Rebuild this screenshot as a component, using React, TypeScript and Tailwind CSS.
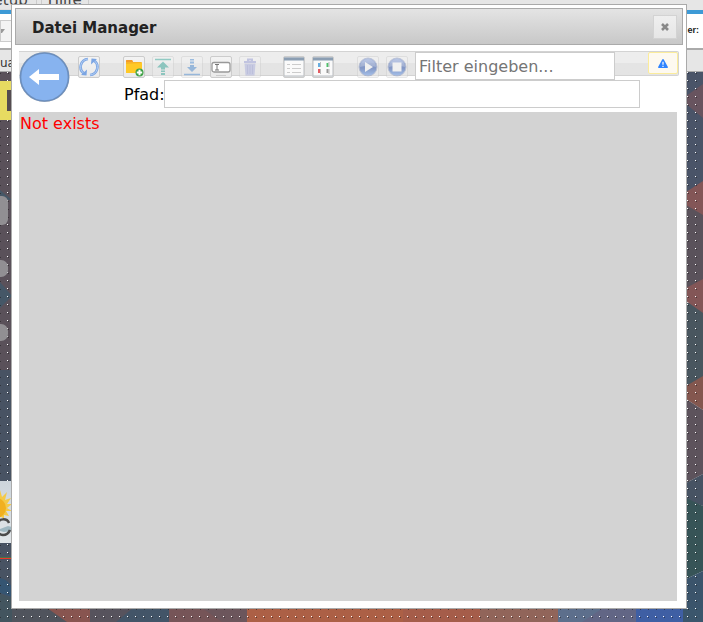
import type { ReactNode } from "react";

const BLUE = "#7ba5e3";

/** Page behind the dialog: menu, tab strips and the dotted view canvas. */
function EditorPage() {
  return (
    <div className="flex min-h-screen flex-col overflow-hidden bg-[#e6e6e6]">
      <nav className="flex h-[10px] items-end overflow-hidden text-[15px] leading-5 text-[#444]">
        <div className="-ml-4 flex h-5 items-start border-b border-[#ddd]">
          <button className="h-full border-r border-[#ccc] pr-2 leading-5">Setup</button>
          <button className="ml-1 h-full border-x border-[#ccc] px-1.5 leading-5">Hilfe</button>
        </div>
      </nav>
      <div className="h-1 bg-[#3d9ad6]" />
      <div className="flex h-[34px] items-center justify-between bg-white">
        <div className="flex h-[22px] w-11 items-center border border-[#ccc] bg-[#f3f3f3]">
          <svg width="4" height="4" viewBox="0 0 4 4">
            <path d="M0 0h4L1 4H0z" fill="#999" />
          </svg>
        </div>
        <span className="pr-1 font-['Liberation_Sans'] text-[9px] font-bold text-[#222]">er:</span>
      </div>
      <div className="h-0.5 border-y border-[#aaa] bg-white" />
      <div className="h-[22px] border-b border-[#aaa] text-[12px] leading-[26px] text-[#333]">ua</div>
      <Wallpaper />
    </div>
  );
}

function Wallpaper() {
  return (
    <svg className="w-full flex-1" viewBox="0 72 703 550" preserveAspectRatio="none">
      <defs>
        <pattern id="dots" width="8" height="8" patternUnits="userSpaceOnUse">
          <rect x="7" y="0" width="1" height="1" fill="#fff" />
          <rect x="0" y="1" width="1" height="1" fill="#222" fillOpacity=".6" />
        </pattern>
        <linearGradient id="sky" x1="0" y1="0" x2="0" y2="1">
          <stop offset="0" stopColor="#cdd5dc" />
          <stop offset="1" stopColor="#e1e6e9" />
        </linearGradient>
      </defs>
      <rect y="72" width="12" height="550" fill="#5a515a" />
      <path d="M0 190l12 10H0zM0 282l12 14-12 12z" fill="#455767" />
      <path d="M0 370h12v252H0z" fill="#485363" />
      <path d="M0 578q7 1 12 9v10l-12-4z" fill="#355572" />
      <path d="M0 594l12 4v24H0z" fill="#43555f" />

      <path d="M686 72h17v121h-17z" fill="#4a5468" />
      <path d="M703 84v34l-17-14v-8z" fill="#68545f" />
      <path d="M686 193h17v97h-17z" fill="#5a525b" />
      <path d="M703 181v34l-17-10v-13z" fill="#835657" />
      <path d="M686 303h17v86h-17z" fill="#49565f" />
      <path d="M686 288l17-9v34l-17-12z" fill="#835657" />
      <path d="M686 386l17-10v34l-17-11z" fill="#84574f" />
      <path d="M686 399l17 11v64l-17 9z" fill="#5d535c" />
      <path d="M686 483l17-9v32l-17-6z" fill="#475363" />
      <path d="M686 498l17 8v65l-17 8z" fill="#375457" />
      <path d="M686 579l17-8v51h-17z" fill="#3b546b" />

      <rect x="12" y="608" width="78" height="14" fill="#50545d" />
      <path d="M47 608h43v14H67z" fill="#885550" />
      <rect x="90" y="608" width="79" height="14" fill="#57535d" />
      <path d="M133 608h36v14h-53z" fill="#435568" />
      <rect x="169" y="608" width="78" height="14" fill="#765558" />
      <path d="M202 608h45v14h-25z" fill="#6c565c" />
      <rect x="247" y="608" width="156" height="14" fill="#ac6046" />
      <rect x="403" y="608" width="77" height="14" fill="#a55d4a" />
      <rect x="480" y="608" width="78" height="14" fill="#91655a" />
      <rect x="558" y="608" width="78" height="14" fill="#626685" />
      <path d="M558 608h45l-21 14h-24z" fill="#5d6f8c" />
      <rect x="636" y="608" width="47" height="14" fill="#3f5fa4" />
      <rect x="683" y="608" width="20" height="14" fill="#3b566c" />
      <rect y="72" width="703" height="550" fill="url(#dots)" />

      <rect y="81" width="12" height="39" fill="#e7db61" />
      <path d="M7 90h5v21H7z" fill="#554c50" />
      <rect x="-12" y="196" width="20" height="29" rx="6" fill="#918f93" />
      <rect x="-12" y="260" width="20" height="17" rx="7" fill="#918f93" />
      <rect x="-12" y="324" width="20" height="17" rx="7" fill="#918f93" />
      <rect y="481" width="12" height="62" fill="url(#sky)" />
      <path d="M0 490l2 7 5-5-2 8 6-2-4 6h5l-5 4 5 3H6l3 5-5-1v4l-4-3z" fill="#f4ca48" />
      <circle cx="-4" cy="508" r="10" fill="#f1b01f" />
      <path d="M0 529l8-3 4 1v4l-8 1-4-1z" fill="#9fb8c2" />
      <path d="M9 523c-2-5-10-5-12 1q-2 10 6 11 5 0 7-5" fill="none" stroke="#4b4b4b" strokeWidth="2.5" />
      <rect y="557" width="12" height="1" fill="#4b7444" />
      <rect y="558" width="12" height="1" fill="#ed3528" />
    </svg>
  );
}

function ToolButton({
  label,
  faded = false,
  children,
}: {
  label: string;
  faded?: boolean;
  children: ReactNode;
}) {
  return (
    <button
      aria-label={label}
      disabled={faded}
      className={
        "mt-1 size-[22px] shrink-0 rounded-xs border border-[#ccc] bg-linear-to-b from-[#f3f3f3] to-[#eaeaea] " +
        (faded ? "opacity-45" : "")
      }
    >
      <svg width="20" height="20" viewBox="0 0 20 20" fill="none">
        {children}
      </svg>
    </button>
  );
}

function PlayDisc() {
  return (
    <>
      <circle cx="10" cy="10" r="9" fill="url(#disc)" stroke="#8292bd" />
      <path d="M2 10a8 8 0 0 1 16 0q-8-3-16 0z" fill="#fff" fillOpacity=".25" />
    </>
  );
}

function Toolbar() {
  return (
    <div
      role="toolbar"
      className="mx-1 mt-1.5 flex h-[25px] items-start gap-[7px] rounded-r-xs border border-l-0 border-[#d3d3d3] bg-linear-to-b from-[#ededed] from-50% to-[#e4e4e4] to-50%"
    >
      <button aria-label="Zurück" className="mr-px size-[51px] shrink-0">
        <svg width="51" height="51" viewBox="0 0 51 51">
          <circle cx="25.500" cy="25" r="25" fill="#bbb" />
          <circle cx="25.500" cy="25" r="24" fill="#87b3ef" stroke="#6c8fbe" strokeWidth="1.600" />
          <path d="M10 25l10-8v5h20v6H20v5z" fill="#fff" />
        </svg>
      </button>
      <ToolButton label="Aktualisieren">
        <path d="M9 2A8 8 0 0 0 5 16.500" stroke={BLUE} strokeWidth="2.600" />
        <path d="M9 2A8 8 0 0 0 5 16.500" stroke="#b5cff3" />
        <path d="M2 18l5.500.500.500-6z" fill={BLUE} />
        <path d="M11 18a8 8 0 0 0 4-14.500" stroke={BLUE} strokeWidth="2.600" />
        <path d="M11 18a8 8 0 0 0 4-14.500" stroke="#b5cff3" />
        <path d="M18 2l-5.500-.500-.500 6z" fill={BLUE} />
      </ToolButton>

      <span className="w-[9px] shrink-0" />
      <ToolButton label="Neuer Ordner">
        <path d="M2 4q0-1 1-1h5l1 2h8q1 0 1 1v9q0 1-1 1H3q-1 0-1-1z" fill="#f8b526" />
        <path d="M2 7l16-1v9q0 1-1 1H3q-1 0-1-1z" fill="#ffc927" />
        <path d="M2 4q0-1 1-1h5l1 2H2z" fill="#f39b2c" />
        <circle cx="15.5" cy="15.5" r="4" fill="#3da044" />
        <path d="M15.5 12.8v5.4M12.8 15.5h5.4" stroke="#fff" strokeWidth="2" />
      </ToolButton>
      <ToolButton label="Hochladen" faded>
        <path d="M2 2.500h16" stroke="#22a092" strokeWidth="1.500" />
        <path d="M10 4.500l6 6h-4v2H8v-2H4z" fill="#22a092" />
        <path d="M8 13.500h4v1.500H8zM8 16h4v2H8z" fill="#22a092" />
      </ToolButton>
      <ToolButton label="Herunterladen" faded>
        <path d="M8 2h4v1.500H8zM8 4.500h4v2H8z" fill="#3b82d0" />
        <path d="M8 8h4v2h3l-5 5-5-5h3z" fill="#3b82d0" />
        <path d="M2 17.500h16" stroke="#3b82d0" strokeWidth="1.500" />
      </ToolButton>
      <ToolButton label="Umbenennen">
        <rect x="1" y="5.500" width="18" height="9.500" rx="2" fill="#fff" stroke="#999" strokeWidth="1.300" />
        <path d="M4 7.500h4M4 13h4M6 7.500V13" stroke="#777" />
        <path d="M5 18.500h10" stroke="#ccc" />
      </ToolButton>
      <ToolButton label="Löschen" faded>
        <path d="M4 5h12M8 4V2.500h4V4" stroke="#8d94d2" strokeWidth="2" />
        <path d="M4.500 6.500h11l-1 12h-9z" fill="#a8ade0" />
        <path d="M7.500 8v9M10 8v9M12.500 8v9" stroke="#8d94d2" />
      </ToolButton>

      <span className="w-2 shrink-0" />
      <ToolButton label="Liste">
        <path d="M0 1h20v18H0z" fill="#fafafa" stroke="#b8bdc2" />
        <path d="M0 2h20" stroke="#8b9eb3" strokeWidth="3" />
        <path d="M3 7.500h3M3 11.500h3M3 15.500h3M8 7.500h9M8 11.500h9M8 15.500h9" stroke="#ccc" />
      </ToolButton>
      <ToolButton label="Kacheln">
        <path d="M0 1h20v18H0z" fill="#fafafa" stroke="#b8bdc2" />
        <path d="M0 2h20" stroke="#8b9eb3" strokeWidth="3" />
        <path d="M5 6h2v4H5z" fill="#68aee0" />
        <path d="M13.500 6h2v4h-2z" fill="#4fc06b" />
        <path d="M5 12h2v4H5z" fill="#e35b62" />
        <path d="M13.500 12h2v4h-2z" fill="#999" />
        <path d="M7.500 5v5M7.500 12v5M16 5v5M16 12v5" stroke="#bbb" />
      </ToolButton>

      <span className="w-[9px] shrink-0" />
      <ToolButton label="Abspielen" faded>
        <defs>
          <linearGradient id="disc" x1="0" y1="0" x2="0" y2="1">
            <stop offset="0" stopColor="#5c80d4" />
            <stop offset=".55" stopColor="#0f3aa0" />
            <stop offset="1" stopColor="#5a98f4" />
          </linearGradient>
        </defs>
        <PlayDisc />
        <path d="M7 5l8 5-8 5z" fill="#fff" />
      </ToolButton>
      <ToolButton label="Stopp" faded>
        <PlayDisc />
        <path d="M5.500 5.500h9v9h-9z" fill="#fff" />
      </ToolButton>

      <input
        type="text"
        aria-label="Filter"
        placeholder="Filter eingeben..."
        className="h-7 w-[200px] min-w-0 border border-[#ccc] bg-white px-[3px] text-base leading-6 placeholder:text-[#757575]"
      />
      <button
        aria-label="Warnung"
        className="ml-auto flex h-[22px] w-[30px] shrink-0 items-center justify-center rounded-xs border border-[#fbec9b] bg-[#fdf9f0]"
      >
        <svg width="10" height="9" viewBox="0 0 10 9">
          <path d="M5 0q.5 0 .8.600L9.900 8q.2 1-.7 1H.8q-.9 0-.7-1L4.200.600Q4.500 0 5 0z" fill="#2e83ff" />
          <path d="M5 2.800v3M5 6.800v1.200" stroke="#fff" strokeWidth="1.200" />
        </svg>
      </button>
    </div>
  );
}

export default function App() {
  return (
    <main className="relative min-h-screen overflow-hidden font-['DejaVu_Sans',sans-serif]">
      <EditorPage />

      <section
        role="dialog"
        aria-labelledby="dialog-title"
        className="absolute top-1 right-4 bottom-[13px] left-[11px] flex flex-col border border-[#aaa] bg-white p-[3px] text-base text-[#111]"
      >
        <header className="flex h-[37px] shrink-0 items-center justify-between border border-[#aaa] bg-linear-to-b from-[#e4e4e4] to-[#c8c8c8] pr-[5px] pl-4">
          <h1 id="dialog-title" className="pt-1 text-[15px] font-bold text-[#222]">
            Datei Manager
          </h1>
          <button
            aria-label="Schließen"
            className="flex size-6 items-center justify-center border border-[#d3d3d3] bg-linear-to-b from-[#efefef] to-[#e6e6e6]"
          >
            <svg width="8" height="8" viewBox="0 0 8 8">
              <path d="M1 1l6 6M7 1L1 7" stroke="#888" strokeWidth="2.600" />
            </svg>
          </button>
        </header>

        <Toolbar />

        <div className="mt-1 mr-[43px] ml-[109px] flex items-center">
          <label htmlFor="path" className="w-10 shrink-0 pt-0.5 text-black">
            Pfad:
          </label>
          <input id="path" type="text" className="h-7 min-w-0 flex-1 border border-[#ccc] bg-white px-1" />
        </div>

        <div className="mx-1 mt-1 mr-1.5 mb-1 flex-1 bg-[#d3d3d3] px-px text-[#f00]">Not exists</div>
      </section>
    </main>
  );
}
